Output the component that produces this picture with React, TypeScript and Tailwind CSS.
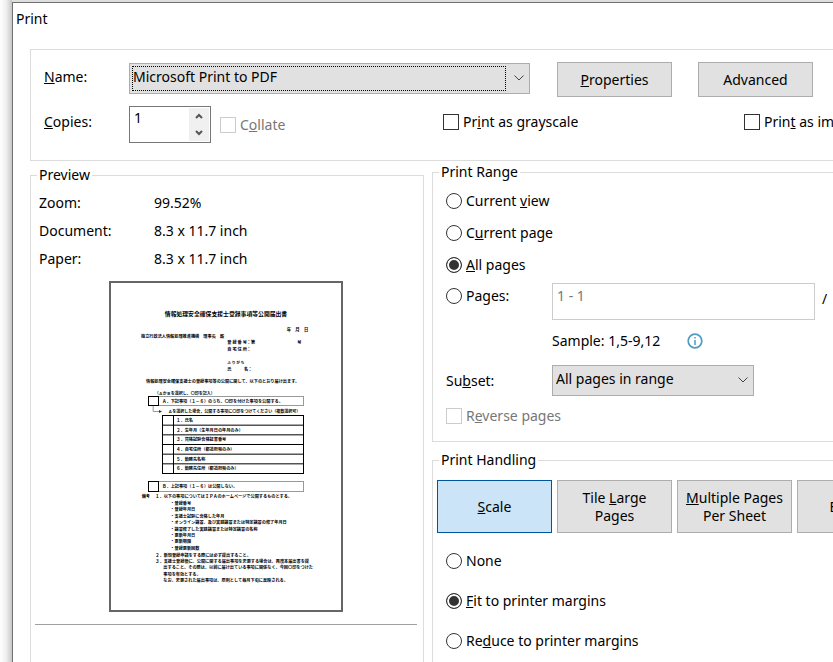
import React, { useState } from "react";

type Line = { x: number; y: number; size: number; text: string };

// Text lines of the previewed page, in the page's own units (1380 x 1962)
const pageLines: Line[] = [
  { x: 1054, y: 290, size: 26, text: "年　月　日" },
  { x: 180, y: 330, size: 25, text: "独立行政法人情報処理推進機構　理事長　殿" },
  { x: 698, y: 368, size: 25, text: "登 録 番 号：第" },
  { x: 1118, y: 368, size: 25, text: "号" },
  { x: 698, y: 410, size: 25, text: "自 宅 住 所：" },
  { x: 698, y: 486, size: 22, text: "ふ り が な" },
  { x: 698, y: 526, size: 25, text: "氏　　　名：" },
  { x: 210, y: 598, size: 25, text: "情報処理安全確保支援士の登録事項等の公開に関して、以下のとおり届け出ます。" },
  { x: 262, y: 674, size: 24, text: "（ＡかＢを選択し、〇印を記入）" },
  { x: 308, y: 720, size: 25, text: "Ａ．下記事項（１－６）のうち、〇印を付けた事項を公開する。" },
  { x: 344, y: 780, size: 24, text: "Ａを選択した場合，公開する事項に〇印をつけてください（複数選択可）" },
  { x: 308, y: 1230, size: 25, text: "Ｂ．上記事項（１－６）は公開しない。" },
  { x: 184, y: 1290, size: 25, text: "備考" },
  { x: 266, y: 1290, size: 25, text: "１．以下の事項についてはＩＰＡのホームページで公開するものとする。" },
  { x: 356, y: 1330, size: 25, text: "・登録番号" },
  { x: 356, y: 1368, size: 25, text: "・登録年月日" },
  { x: 356, y: 1408, size: 25, text: "・支援士試験に合格した年月" },
  { x: 356, y: 1446, size: 25, text: "・オンライン講習、及び実践講習または特定講習の修了年月日" },
  { x: 356, y: 1486, size: 25, text: "・講習修了した実践講習または特定講習の名称" },
  { x: 356, y: 1524, size: 25, text: "・更新年月日" },
  { x: 356, y: 1562, size: 25, text: "・更新期限" },
  { x: 356, y: 1600, size: 25, text: "・登録更新回数" },
  { x: 266, y: 1642, size: 25, text: "２．新規登録申請をする際には必ず提出すること。" },
  { x: 266, y: 1678, size: 25, text: "３．支援士登録後に、公開に関する届出事項を変更する場合は、再度本届出書を提" },
  { x: 314, y: 1718, size: 25, text: "出すること。その際は、以前に届け出ている事項に関係なく、今回〇印をつけた" },
  { x: 314, y: 1758, size: 25, text: "事項を有効とする。" },
  { x: 314, y: 1796, size: 25, text: "なお、変更された届出事項は、原則として毎月下旬に反映される。" },
];

const pageItems = [
  "１．氏名",
  "２．生年月（生年月日の年月のみ）",
  "３．資格試験合格証書番号",
  "４．自宅住所（都道府県のみ）",
  "５．勤務先名称",
  "６．勤務先住所（都道府県のみ）",
];

const PagePreview = () => (
  <svg
    viewBox="0 0 1380 1962"
    className="block w-full font-['Noto_Sans_CJK_JP',sans-serif] font-bold"
    role="img"
    aria-label="Page preview"
  >
    <text x="690" y="200" fontSize="35" textAnchor="middle">
      情報処理安全確保支援士登録事項等公開届出書
    </text>
    {pageLines.map((line, index) => (
      <text key={index} x={line.x} y={line.y} fontSize={line.size}>
        {line.text}
      </text>
    ))}

    {/* choice boxes */}
    <g fill="none" stroke="#999" strokeWidth="6">
      <rect x="225" y="681" width="930" height="54" />
      <rect x="225" y="1191" width="930" height="60" />
      <path d="M253 738v33h40" />
    </g>
    <path d="M288 762l18 9-18 9z" fill="#333" />
    <g fill="none" stroke="#000" strokeWidth="6">
      <rect x="225" y="681" width="60" height="54" />
      <rect x="225" y="1191" width="60" height="60" />
      <rect x="309" y="795" width="846" height="348" />
      <path d="M375 795v348" />
    </g>

    {pageItems.map((item, index) => (
      <g key={item}>
        {index > 0 && (
          <path d={`M309 ${795 + index * 58}h846`} stroke="#000" strokeWidth="6" />
        )}
        <text x="392" y={834 + index * 58} fontSize="25">
          {item}
        </text>
      </g>
    ))}
  </svg>
);

const Chevron = ({ className }: { className: string }) => (
  <svg
    viewBox="0 0 10 6"
    className={className}
    fill="none"
    stroke="#444"
    strokeWidth="1"
  >
    <path d="M.5.5L5 5 9.5.5" />
  </svg>
);

const SpinArrow = ({ up }: { up?: boolean }) => (
  <svg viewBox="0 0 8 6" className="w-2 h-1.5" fill="none" stroke="#555" strokeWidth="2">
    <path d={up ? "M1 5l3-3 3 3" : "M1 1l3 3 3-3"} />
  </svg>
);

type ChoiceProps = {
  type: "checkbox" | "radio";
  name: string;
  children: React.ReactNode;
  checked?: boolean;
  disabled?: boolean;
  onChange?: () => void;
};

const Choice = ({ type, name, children, checked, disabled, onChange }: ChoiceProps) => (
  <label
    className={`flex items-center gap-1 whitespace-nowrap ${disabled ? "text-[#777]" : ""}`}
  >
    <input
      type={type}
      name={name}
      checked={checked}
      disabled={disabled}
      onChange={onChange}
      className={`appearance-none size-4 shrink-0 border bg-white ${
        disabled ? "border-[#ccc]" : "border-[#333]"
      } ${
        type === "radio"
          ? "rounded-full checked:bg-[#333] checked:shadow-[inset_0_0_0_2px_#fff]"
          : "checked:bg-[#333]"
      }`}
    />
    <span>{children}</span>
  </label>
);

const PushButton = ({
  children,
  className,
  active,
  onClick,
}: {
  children: React.ReactNode;
  className: string;
  active?: boolean;
  onClick?: () => void;
}) => (
  <button
    type="button"
    onClick={onClick}
    className={`w-[115px] shrink-0 border leading-[18px] ${className} ${
      active ? "border-[#00559b] bg-[#cce4f7]" : "border-[#adadad] bg-[#e1e1e1]"
    }`}
  >
    {children}
  </button>
);

const App = () => {
  const [copies, setCopies] = useState(1);
  const [grayscale, setGrayscale] = useState(false);
  const [asImage, setAsImage] = useState(false);
  const [range, setRange] = useState("all");
  const [handling, setHandling] = useState("scale");
  const [scaling, setScaling] = useState("fit");

  return (
    <div className="h-screen overflow-hidden flex bg-[#dedede] font-['Noto_Sans',sans-serif] text-sm text-black">
      <div className="w-3 shrink-0 bg-linear-to-r from-white via-[#f0f0f0] to-[#c8c8c8]" />
      <main className="grow shrink-0 basis-0 min-w-[920px] mt-0.5 border-l border-t border-[#707070] bg-white">
        <h1 className="h-8 px-[3px] leading-8">Print</h1>

        <form className="mt-3.5 ml-[17px] mr-4">
          <section className="border border-[#dcdcdc] h-28 pl-[13px] pt-3">
            <div className="flex items-start">
              <label htmlFor="printer" className="w-[85px] pt-[5px]">
                <u>N</u>ame:
              </label>
              <div className="relative w-[401px] mt-px">
                <select
                  id="printer"
                  className="appearance-none block w-full h-[31px] border border-[#adadad] bg-[#e1e1e1] pl-[3px] pb-1"
                >
                  <option>Microsoft Print to PDF</option>
                </select>
                <span className="absolute top-[3px] bottom-[3px] left-[3px] right-6 border border-dotted border-black pointer-events-none" />
                <Chevron className="absolute right-1.5 top-3 w-2.5 h-1.5 pointer-events-none" />
              </div>
              <PushButton className="h-[35px] ml-[27px]">
                <u>P</u>roperties
              </PushButton>
              <PushButton className="h-[35px] ml-[26px]">Advanced</PushButton>
            </div>

            <div className="flex items-start mt-[9px]">
              <label htmlFor="copies" className="w-[85px] pt-1.5">
                <u>C</u>opies:
              </label>
              <div className="flex w-[82px] h-[37px] border border-[#777] p-px">
                <input
                  id="copies"
                  type="text"
                  inputMode="numeric"
                  value={copies}
                  onChange={(e) => setCopies(Number(e.target.value) || 1)}
                  className="min-w-0 flex-1 h-5 pl-[3px] outline-none"
                />
                <div className="flex flex-col w-5 bg-[#f0f0f0]">
                  <button
                    type="button"
                    aria-label="More copies"
                    onClick={() => setCopies(copies + 1)}
                    className="flex-1 flex items-center justify-center"
                  >
                    <SpinArrow up />
                  </button>
                  <button
                    type="button"
                    aria-label="Fewer copies"
                    onClick={() => setCopies(Math.max(1, copies - 1))}
                    className="flex-1 flex items-center justify-center"
                  >
                    <SpinArrow />
                  </button>
                </div>
              </div>
              <div className="w-[232px] pl-[9px] pt-[9px]">
                <Choice type="checkbox" name="collate" disabled>
                  C<u>o</u>llate
                </Choice>
              </div>
              <div className="w-[301px] pt-1.5">
                <Choice
                  type="checkbox"
                  name="grayscale"
                  checked={grayscale}
                  onChange={() => setGrayscale(!grayscale)}
                >
                  Pr<u>i</u>nt as grayscale
                </Choice>
              </div>
              <div className="pt-1.5">
                <Choice
                  type="checkbox"
                  name="image"
                  checked={asImage}
                  onChange={() => setAsImage(!asImage)}
                >
                  Prin<u>t</u> as image
                </Choice>
              </div>
            </div>
          </section>

          <div className="flex items-start gap-2">
            <fieldset className="w-[394px] shrink-0 mt-1 border border-[#dcdcdc] pl-1 pr-1.5 pb-20">
              <legend className="ml-0.5 px-0.5">Preview</legend>
              <dl className="grid grid-cols-[115px_1fr] px-1 leading-7 mt-1">
                <dt>Zoom:</dt>
                <dd>99.52%</dd>
                <dt>Document:</dt>
                <dd>8.3 x 11.7 inch</dd>
                <dt>Paper:</dt>
                <dd>8.3 x 11.7 inch</dd>
              </dl>
              <div className="w-[234px] mt-2 ml-[74px] border-2 border-[#666]">
                <PagePreview />
              </div>
              <hr className="mt-3 border-[#a0a0a0]" />
            </fieldset>

            <div className="flex-1">
              <fieldset className="mt-px border border-[#dcdcdc] pb-[15px]">
                <legend className="ml-1.5 px-0.5">Print Range</legend>
                <div className="pl-[13px]">
                  <div className="grid auto-rows-[32px] pt-[3px]">
                    <Choice
                      type="radio"
                      name="range"
                      checked={range === "view"}
                      onChange={() => setRange("view")}
                    >
                      Current <u>v</u>iew
                    </Choice>
                    <Choice
                      type="radio"
                      name="range"
                      checked={range === "page"}
                      onChange={() => setRange("page")}
                    >
                      C<u>u</u>rrent page
                    </Choice>
                    <Choice
                      type="radio"
                      name="range"
                      checked={range === "all"}
                      onChange={() => setRange("all")}
                    >
                      <u>A</u>ll pages
                    </Choice>
                  </div>
                  <div className="flex items-start pt-0.5">
                    <div className="w-[106px] pt-[3px]">
                      <Choice
                        type="radio"
                        name="range"
                        checked={range === "pages"}
                        onChange={() => setRange("pages")}
                      >
                        Pa<u>g</u>es:
                      </Choice>
                    </div>
                    <input
                      type="text"
                      aria-label="Pages"
                      defaultValue="1 - 1"
                      disabled
                      className="w-[263px] h-[37px] border border-[#ccc] pl-1 pb-3 text-[#777]"
                    />
                    <span className="pl-[7px] pt-1.5">/</span>
                  </div>
                  <div className="flex items-center pl-[106px] mt-[11px]">
                    <span className="w-[135px]">Sample: 1,5-9,12</span>
                    <svg viewBox="0 0 16 16" className="size-4" fill="none" stroke="#4f9bc0">
                      <circle cx="8" cy="8" r="6.8" strokeWidth="1.7" />
                      <path d="M8 7v5M8 4v1.5" strokeWidth="1.5" />
                    </svg>
                  </div>
                  <div className="flex items-center mt-3.5">
                    <label htmlFor="subset" className="w-[106px]">
                      Su<u>b</u>set:
                    </label>
                    <div className="relative w-[202px]">
                      <select
                        id="subset"
                        className="appearance-none block w-full h-[31px] border border-[#adadad] bg-[#e1e1e1] pl-[3px] pb-1"
                      >
                        <option>All pages in range</option>
                      </select>
                      <Chevron className="absolute right-1.5 top-3 w-2.5 h-1.5 pointer-events-none" />
                    </div>
                  </div>
                  <div className="mt-2.5">
                    <Choice type="checkbox" name="reverse" disabled>
                      R<u>e</u>verse pages
                    </Choice>
                  </div>
                </div>
              </fieldset>

              <fieldset className="mt-2 border border-[#dcdcdc] pb-20">
                <legend className="ml-1.5 px-0.5">Print Handling</legend>
                <div className="flex gap-[5px] pl-1 pt-2.5">
                  <PushButton
                    className="h-[53px]"
                    active={handling === "scale"}
                    onClick={() => setHandling("scale")}
                  >
                    <u>S</u>cale
                  </PushButton>
                  <PushButton
                    className="h-[53px]"
                    active={handling === "tile"}
                    onClick={() => setHandling("tile")}
                  >
                    Tile <u>L</u>arge
                    <br />
                    Pages
                  </PushButton>
                  <PushButton
                    className="h-[53px]"
                    active={handling === "multiple"}
                    onClick={() => setHandling("multiple")}
                  >
                    <u>M</u>ultiple Pages
                    <br />
                    Per Sheet
                  </PushButton>
                  <PushButton
                    className="h-[53px]"
                    active={handling === "booklet"}
                    onClick={() => setHandling("booklet")}
                  >
                    Booklet
                  </PushButton>
                </div>
                <div className="grid auto-rows-[40px] pl-[13px] pt-2">
                  <Choice
                    type="radio"
                    name="scaling"
                    checked={scaling === "none"}
                    onChange={() => setScaling("none")}
                  >
                    None
                  </Choice>
                  <Choice
                    type="radio"
                    name="scaling"
                    checked={scaling === "fit"}
                    onChange={() => setScaling("fit")}
                  >
                    <u>F</u>it to printer margins
                  </Choice>
                  <Choice
                    type="radio"
                    name="scaling"
                    checked={scaling === "reduce"}
                    onChange={() => setScaling("reduce")}
                  >
                    Re<u>d</u>uce to printer margins
                  </Choice>
                </div>
              </fieldset>
            </div>
          </div>
        </form>
      </main>
    </div>
  );
};

export default App;
